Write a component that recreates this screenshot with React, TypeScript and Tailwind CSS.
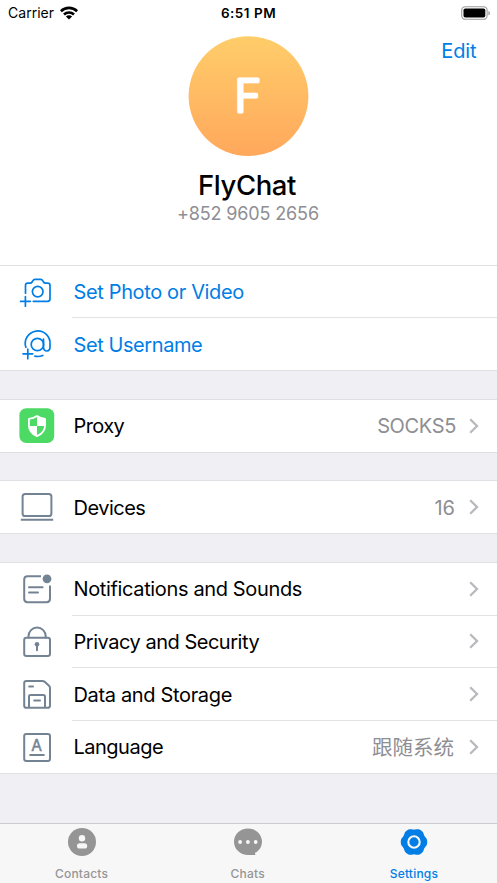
import type { ReactNode } from "react";

const Wifi = () => (
  <svg width="20" height="14" viewBox="0 0 20 14" fill="none" stroke="#000" strokeWidth="2.6">
    <path d="M1.9 5.2C6.4 0.8 13.6 0.8 18.1 5.2" />
    <path d="M5 8.5C7.8 5.8 12.2 5.8 15 8.5" />
    <path d="M10 13.4L6.9 10.5C8.6 8.9 11.4 8.9 13.1 10.5Z" fill="#000" stroke="none" />
  </svg>
);

const Battery = () => (
  <svg width="30" height="14" viewBox="0 0 30 14" fill="none">
    <rect x="0.7" y="0.7" width="25.4" height="12.6" rx="3.6" stroke="#9b9b9b" strokeWidth="1.1" />
    <rect x="2.5" y="2.5" width="21.8" height="9" rx="1.8" fill="#000" />
    <path d="M27.4 4.9C29.4 5.6 29.4 8.6 27.4 9.3Z" fill="#9b9b9b" />
  </svg>
);

const Chevron = () => (
  <svg width="10" height="16" viewBox="0 0 10 16" fill="none" stroke="#b8b8bd" strokeWidth="2.3">
    <path d="M1.2 1.2L8 8L1.2 14.8" />
  </svg>
);

const RowIcon = ({ children }: { children: ReactNode }) => (
  <svg width="40" height="40" viewBox="0 0 40 40" fill="none" stroke="currentColor" strokeWidth="2" strokeLinecap="round" strokeLinejoin="round">
    {children}
  </svg>
);

const CameraIcon = () => (
  <RowIcon>
    <g strokeWidth="1.7">
      <path d="M8.5 21.2V13.4Q8.5 11.2 10.7 11.2H13.1Q14.4 11.2 15.1 10L15.9 8.6Q16.6 7.4 17.9 7.4H23.7Q25 7.4 25.7 8.6L26.5 10Q27.2 11.2 28.5 11.2H30.7Q33 11.2 33 13.4V27Q33 29.3 30.7 29.3H16.3" />
      <circle cx="20.7" cy="19.6" r="5.3" />
      <path d="M8.4 24.5V34.2M3.5 29.3H13.3" />
    </g>
  </RowIcon>
);

const AtIcon = () => (
  <RowIcon>
    <g strokeWidth="1.7" transform="translate(0 0.9)">
      <path d="M8.9 22.4A12.4 12.4 0 1 1 33 19.6V22.4C33 27 26.5 27.6 26.5 22.4V14.2" />
      <circle cx="20.4" cy="19.6" r="6.2" />
      <path d="M17.9 31.3Q21.8 32.2 25.8 30.6" />
      <path d="M10.8 24.2V33.8M6 28.9H15.7" />
    </g>
  </RowIcon>
);

const SHIELD = "M20 10C17.4 11.8 14.8 12.5 11.9 12.8V19.3C11.9 24.4 15.3 28.2 20 30.2C24.7 28.2 28.1 24.4 28.1 19.3V12.8C25.2 12.5 22.6 11.8 20 10Z";

const ProxyIcon = () => (
  <svg width="40" height="40" viewBox="0 0 40 40">
    <rect x="2.4" y="2.3" width="34.8" height="34.8" rx="7" fill="#4cd964" />
    <path d="M20 10.4Q23 12.4 27.9 13V20H20Z" fill="#fff" />
    <path d="M20 20V30Q12.6 26.6 12.1 20Z" fill="#fff" />
    <path d={SHIELD} fill="none" stroke="#fff" strokeWidth="1.8" strokeLinejoin="round" />
  </svg>
);

const LaptopIcon = () => (
  <RowIcon>
    <rect x="5.6" y="7" width="28.8" height="22" rx="2.6" />
    <path d="M3.8 32.7H36.2" strokeLinecap="butt" />
  </RowIcon>
);

const NotificationsIcon = () => (
  <RowIcon>
    <path d="M24 7.2H10.6Q7.2 7.2 7.2 10.6V29.8Q7.2 33.2 10.6 33.2H29.6Q33 33.2 33 29.8V16.4" strokeLinecap="butt" />
    <path d="M12 18.3H25.6M12 23.4H21" />
    <circle cx="30" cy="9.8" r="4.4" fill="currentColor" stroke="none" />
  </RowIcon>
);

const LockIcon = () => (
  <RowIcon>
    <rect x="7.2" y="15.8" width="25.8" height="18.2" rx="2.2" />
    <path d="M11.5 15.4V14.2A8.6 8.6 0 0 1 28.7 14.2V15.4" />
    <circle cx="20" cy="22.2" r="2.3" fill="currentColor" stroke="none" />
    <path d="M20 23V28.2" />
  </RowIcon>
);

const DiskIcon = () => (
  <RowIcon>
    <path d="M9.4 7H25.6Q26.6 7 27.4 7.6L32 11.8Q33 12.7 33 14V31.4Q33 33.8 30.6 33.8H9.4Q7.2 33.8 7.2 31.4V9.2Q7.2 7 9.4 7Z" />
    <path d="M12 33V22.6Q12 21 13.6 21H26.4Q28 21 28 22.6V33M17.2 26.6H23M12.2 12.4H16" />
  </RowIcon>
);

const LanguageIcon = () => (
  <RowIcon>
    <rect x="7.2" y="6.9" width="25.8" height="27" rx="2.2" />
    <path d="M13.2 27.9H26.8" />
    <text x="19.7" y="23.9" textAnchor="middle" fontFamily="Inter, sans-serif" fontSize="15.5" fontWeight="400" fill="currentColor" stroke="currentColor" strokeWidth="0.5">A</text>
  </RowIcon>
);

const ContactsTab = () => (
  <svg width="28" height="28" viewBox="0 0 28 28">
    <circle cx="14" cy="14" r="14" fill="#959595" />
    <circle cx="14" cy="10.3" r="3.2" fill="#f7f7f7" />
    <rect x="9" y="15.2" width="10.2" height="5.4" rx="2.7" fill="#f7f7f7" />
  </svg>
);

const ChatsTab = () => (
  <svg width="28" height="28" viewBox="0 0 28 28">
    <path d="M14 0.6C21.8 0.6 28 6.5 28 13.8C28 17.6 26.3 21.1 23.3 23.6C21.9 24.8 20.8 24.6 20.8 25.4C20.9 26.4 21.5 26.7 20.3 26.9C18.4 27.2 16 27 14 27C6.2 27 0 21.1 0 13.8C0 6.5 6.2 0.6 14 0.6Z" fill="#959595" />
    <path d="M20.5 24.5L21.6 26.7H14L18 23Z" fill="#959595" />
    <g fill="#f7f7f7">
      <circle cx="6.1" cy="14" r="1.9" />
      <circle cx="13.9" cy="14" r="1.9" />
      <circle cx="21.7" cy="14" r="1.9" />
    </g>
  </svg>
);

// six rounded lobes, one pointing straight left and one straight right
const gearPoints = Array.from({ length: 120 }, (_, i) => {
  const a = (i / 120) * Math.PI * 2;
  const r = 12.75 + 0.62 * Math.cos(6 * a) - 0.15 * Math.cos(12 * a);
  return `${(14 + r * Math.cos(a)).toFixed(2)},${(14 + r * Math.sin(a) * 1.03).toFixed(2)}`;
}).join(" ");

const SettingsTab = () => (
  <svg width="28" height="28" viewBox="0 0 28 28">
    <polygon points={gearPoints} fill="#007ee5" />
    <circle cx="14" cy="14" r="5.7" fill="none" stroke="#f7f7f7" strokeWidth="2.1" />
  </svg>
);

type RowProps = {
  icon: ReactNode;
  label: ReactNode;
  value?: ReactNode;
  action?: boolean;
  last?: boolean;
};

const Row = ({ icon, label, value, action, last }: RowProps) => (
  <div className={`flex flex-1 pl-[17px] ${action ? "text-[#007ee5]" : "text-[#748393]"}`}>
    <div className="flex w-[55px] items-center">{icon}</div>
    <div className={`flex flex-1 items-center pl-[1.5px] pr-[18px] ${last ? "" : "border-b border-[#e3e3e6]"}`}>
      <div className={`flex-1 text-[20px] ${action ? "" : "text-black"}`}>{label}</div>
      {value && <div className="mr-[14px] text-[20px] text-[#8e8e93]">{value}</div>}
      {!action && <Chevron />}
    </div>
  </div>
);

const Section = ({ className, children }: { className: string; children: ReactNode }) => (
  <section className={`flex flex-col border-y border-[#e0e0e4] bg-white ${className}`}>{children}</section>
);

const tabs = [
  { label: "Contacts", icon: <ContactsTab />, active: false },
  { label: "Chats", icon: <ChatsTab />, active: false },
  { label: "Settings", icon: <SettingsTab />, active: true },
];

const App = () => {
  return (
    <div className="flex h-[883px] w-[497px] flex-col overflow-hidden bg-[#efeff4] font-['Inter','Noto_Sans_CJK_SC',sans-serif]">
      <header className="h-[265px] bg-white">
        <div className="grid h-[26px] grid-cols-3 items-center pl-[8px] pr-[7px] text-[14px]">
          <div className="flex items-center gap-[5px]">
            <span className="pb-[2px] tracking-[0.02px]">Carrier</span>
            <div className="pb-px"><Wifi /></div>
          </div>
          <span className="pr-px text-center text-[13.5px] font-semibold tracking-[0.5px]">6:51 PM</span>
          <div className="-mr-px flex justify-end pb-px"><Battery /></div>
        </div>
        <div className="grid grid-cols-[188px_120px_1fr] pt-[10px]">
          <span />
          <svg width="120" height="120" viewBox="0 0 120 120" className="overflow-visible">
            <defs>
              <linearGradient id="avatar" x1="0" y1="0" x2="0" y2="1">
                <stop offset="0" stopColor="#ffcd6a" />
                <stop offset="1" stopColor="#ffa85c" />
              </linearGradient>
            </defs>
            <circle cx="60.5" cy="60.1" r="59.9" fill="url(#avatar)" />
            <text x="60" y="76.4" textAnchor="middle" fontFamily="Inter, sans-serif" fontSize="45.5" fontWeight="300" fill="#fff" stroke="#fff" strokeWidth="3" strokeLinejoin="round">F</text>
          </svg>
          <span className="pr-[20.5px] text-right text-[20px] leading-[30px] tracking-[-0.1px] text-[#007ee5]">Edit</span>
        </div>
        <h1 className="mt-[12px] pr-[3px] text-center text-[27.5px] font-medium leading-[34px] tracking-[-0.4px]">FlyChat</h1>
        <p className="mt-[1px] pr-px text-center text-[18px] leading-[22px] tracking-[-0.15px] text-[#8e8e93]">+852 9605 2656</p>
      </header>

      <Section className="h-[106px]">
        <Row action icon={<CameraIcon />} label={<div className="tracking-[-0.36px]">Set Photo or Video</div>} />
        <Row action last icon={<AtIcon />} label={<div className="pt-[2px] tracking-[-0.42px]">Set Username</div>} />
      </Section>

      <Section className="mt-[28px] h-[54px]">
        <Row last icon={<ProxyIcon />} label={<div className="tracking-[-0.6px]">Proxy</div>} value={<div className="-mr-px tracking-[-0.35px]">SOCKS5</div>} />
      </Section>

      <Section className="mt-[27px] h-[54px]">
        <Row last icon={<LaptopIcon />} label={<div className="pt-[2px] tracking-[-0.5px]">Devices</div>} value={<div className="pt-[2px]">16</div>} />
      </Section>

      <Section className="mt-[28px] h-[212px]">
        <Row icon={<NotificationsIcon />} label={<div className="pt-px tracking-[-0.36px]">Notifications and Sounds</div>} />
        <Row icon={<LockIcon />} label={<div className="pt-[2px] tracking-[-0.48px]">Privacy and Security</div>} />
        <Row icon={<DiskIcon />} label={<div className="pt-[2px] tracking-[-0.34px]">Data and Storage</div>} />
        <Row last icon={<LanguageIcon />} label={<div className="pt-px tracking-[-0.5px]">Language</div>} value={<div className="mr-px pt-[3px] text-[20.5px]">跟随系统</div>} />
      </Section>

      <nav className="mt-auto -ml-[1.5px] grid h-[60px] grid-cols-3 border-t border-[#ccccce] bg-[#f7f7f7]">
        {tabs.map((tab) => (
          <div key={tab.label} className={`flex flex-col items-center pt-1 text-[12px] font-medium ${tab.active ? "text-[#007ee5]" : "text-[#959595]"}`}>
            {tab.icon}
            <span className="mt-[10px] leading-[16px] tracking-[0.2px]">{tab.label}</span>
          </div>
        ))}
      </nav>
    </div>
  );
};

export default App;
